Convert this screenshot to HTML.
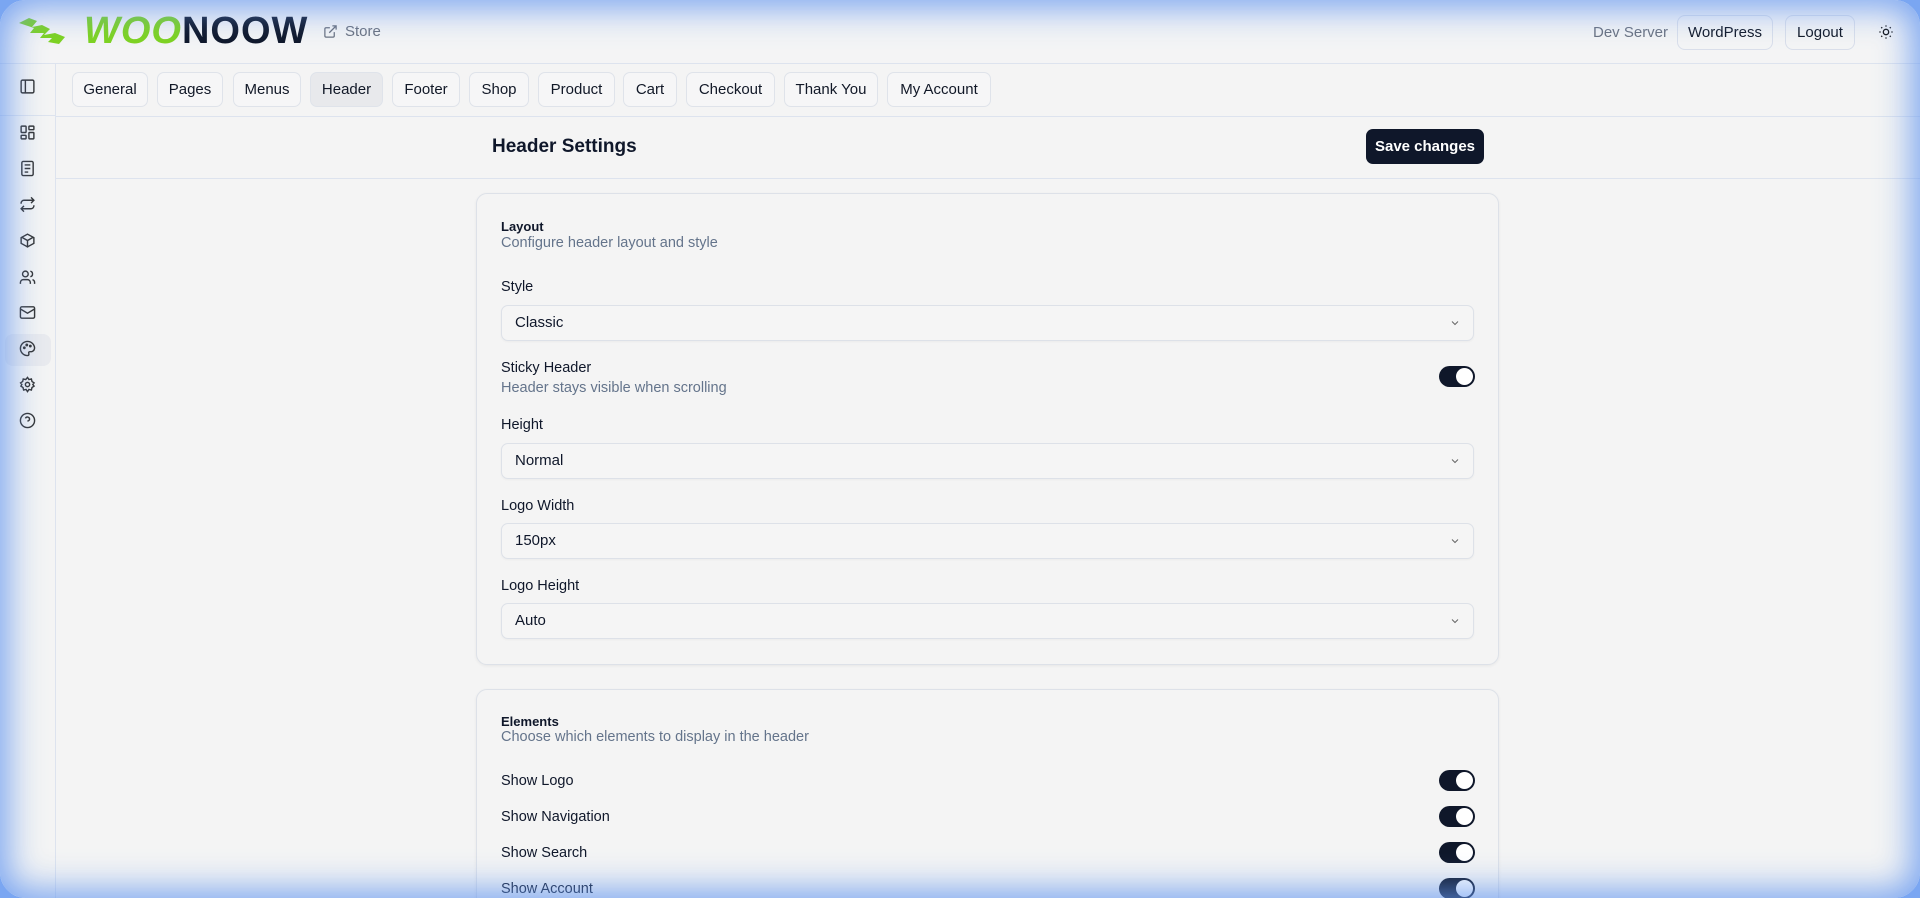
<!DOCTYPE html>
<html><head><meta charset="utf-8"><style>
*{box-sizing:border-box;margin:0;padding:0}
html,body{width:1920px;height:898px;overflow:hidden;background:#f4f4f4;font-family:"Liberation Sans",sans-serif;color:#0f172a}
#wrap{position:relative;width:1920px;height:898px;overflow:hidden}
.abs{position:absolute}
.top{position:absolute;left:0;top:0;width:1920px;height:64px;border-bottom:1px solid #dde3ee;background:#f4f4f5}
.side{position:absolute;left:0;top:64px;width:56px;height:834px;border-right:1px solid #dde3ee}
.tabs{position:absolute;left:56px;top:64px;right:0;height:53px;border-bottom:1px solid #dde3ee}
.tab{position:absolute;top:8px;height:35px;border:1px solid #dfe3ea;border-radius:7px;background:#f6f6f7;font-size:15px;line-height:33px;text-align:center;color:#111827}
.tab.on{background:#e8e9ec}
.hdr{position:absolute;left:56px;top:117px;right:0;height:62px;border-bottom:1px solid #dde3ee}
.card{position:absolute;left:476px;width:1023px;border:1px solid #dde1e8;border-radius:11px;background:#f4f4f4;box-shadow:0 1px 3px rgba(0,0,0,.06)}
.t{position:absolute;left:501px;font-size:14.5px;color:#0f172a}
.b{font-weight:bold;font-size:13px}
.d{position:absolute;left:501px;font-size:14.5px;color:#64748b}
.sel{position:absolute;left:501px;width:973px;border:1px solid #dde1e8;border-radius:7px;background:#f5f5f5;font-size:15px;padding-left:13px;box-shadow:0 1px 2px rgba(0,0,0,.04)}
.sel svg{position:absolute;right:12px;top:50%;margin-top:-6px}
.tg{position:absolute;left:1439px;width:36px;height:21px;border-radius:11px;background:#0f172a}
.tg::after{content:"";position:absolute;right:2px;top:2px;width:17px;height:17px;border-radius:50%;background:#fff}
.ic{position:absolute;left:19px;width:17px;height:17px}
.btn{position:absolute;top:15px;height:35px;border:1px solid #d9deea;border-radius:8px;font-size:15px;line-height:33px;text-align:center;color:#111827}
.glow{position:absolute;left:-20px;top:-20px;width:1960px;height:938px;border:20px solid #7aa6f2;border-radius:46px;box-shadow:inset 0 0 34px 8px rgba(100,150,240,.85);pointer-events:none}
</style></head><body><div id="wrap">
<div class="top">
<svg class="abs" style="left:15px;top:15px" width="62" height="32" viewBox="0 0 62 32"><path d="M4 8 L14 3 L22 6 L17 12 L27 10 L35 14 L29 20 L40 18 L50 22 L44 29 L33 27 L37 23 L25 23 L29 18 L15 18 L19 13 Z" fill="#7ed321"/></svg>
<div class="abs" style="left:84px;top:10px;font-size:38px;font-weight:bold;letter-spacing:1px;font-style:italic;color:#7ed321">WOO<span style="color:#0f172a;font-style:normal">NOOW</span></div>
<svg class="abs" style="left:323px;top:24px" width="15" height="15" viewBox="0 0 24 24" fill="none" stroke="#6b7280" stroke-width="2"><path d="M15 3h6v6M10 14L21 3M18 13v6a2 2 0 0 1-2 2H5a2 2 0 0 1-2-2V8a2 2 0 0 1 2-2h6"/></svg>
<div class="abs" style="left:345px;top:23px;font-size:15px;color:#6b7280">Store</div>
<div class="abs" style="left:1593px;top:24px;font-size:15px;color:#6b7280">Dev Server</div>
<div class="btn" style="left:1677px;width:96px">WordPress</div>
<div class="btn" style="left:1785px;width:70px">Logout</div>
<svg class="abs" style="left:1878px;top:24px" width="16" height="16" viewBox="0 0 24 24" fill="none" stroke="#111" stroke-width="2"><circle cx="12" cy="12" r="4"/><path d="M12 2v2M12 20v2M4.9 4.9l1.4 1.4M17.7 17.7l1.4 1.4M2 12h2M20 12h2M4.9 19.1l1.4-1.4M17.7 6.3l1.4-1.4"/></svg>
</div>
<div class="side">
<div class="abs" style="left:0;top:51px;width:55px;border-top:1px solid #dde3ee"></div>
<div class="abs" style="left:5px;top:270px;width:46px;height:32px;border-radius:8px;background:#e9eaee"></div>
<svg class="ic" style="top:14px" viewBox="0 0 24 24" fill="none" stroke="#333" stroke-width="2"><rect x="3" y="3" width="18" height="18" rx="2"/><path d="M9 3v18"/></svg>
<svg class="ic" style="top:60px" viewBox="0 0 24 24" fill="none" stroke="#333" stroke-width="2"><rect x="3" y="3" width="7" height="9" rx="1"/><rect x="14" y="3" width="7" height="5" rx="1"/><rect x="14" y="12" width="7" height="9" rx="1"/><rect x="3" y="16" width="7" height="5" rx="1"/></svg>
<svg class="ic" style="top:96px" viewBox="0 0 24 24" fill="none" stroke="#333" stroke-width="2"><rect x="4" y="2" width="16" height="20" rx="2"/><path d="M8 7h8M8 12h8M8 17h5"/></svg>
<svg class="ic" style="top:132px" viewBox="0 0 24 24" fill="none" stroke="#333" stroke-width="2"><path d="M17 2l4 4-4 4M3 11v-1a4 4 0 0 1 4-4h14M7 22l-4-4 4-4M21 13v1a4 4 0 0 1-4 4H3"/></svg>
<svg class="ic" style="top:168px" viewBox="0 0 24 24" fill="none" stroke="#333" stroke-width="2"><path d="M21 16V8l-9-5-9 5v8l9 5 9-5zM3.3 7L12 12l8.7-5M12 22V12"/></svg>
<svg class="ic" style="top:205px" viewBox="0 0 24 24" fill="none" stroke="#333" stroke-width="2"><circle cx="9" cy="7" r="4"/><path d="M2 21v-2a4 4 0 0 1 4-4h6a4 4 0 0 1 4 4v2M16 3.1a4 4 0 0 1 0 7.8M22 21v-2a4 4 0 0 0-3-3.9"/></svg>
<svg class="ic" style="top:240px" viewBox="0 0 24 24" fill="none" stroke="#333" stroke-width="2"><rect x="2" y="4" width="20" height="16" rx="2"/><path d="M22 7l-10 6L2 7"/></svg>
<svg class="ic" style="top:276px" viewBox="0 0 24 24" fill="none" stroke="#333" stroke-width="2"><path d="M12 2a10 10 0 0 0 0 20c1.5 0 2-1 2-2 0-1.5-1-2 0-3s3 0 5-1 3-3 3-5A10 10 0 0 0 12 2z"/><circle cx="7.5" cy="11" r="1"/><circle cx="11" cy="7" r="1"/><circle cx="16" cy="8.5" r="1"/></svg>
<svg class="ic" style="top:312px" viewBox="0 0 24 24" fill="none" stroke="#333" stroke-width="2"><circle cx="12" cy="12" r="3"/><path d="M12 2l2 3 3.5-.8.8 3.5 3 2-1.8 2.3 1.8 2.3-3 2-.8 3.5-3.5-.8-2 3-2-3-3.5.8-.8-3.5-3-2L4 12 2.2 9.7l3-2 .8-3.5 3.5.8z"/></svg>
<svg class="ic" style="top:348px" viewBox="0 0 24 24" fill="none" stroke="#333" stroke-width="2"><circle cx="12" cy="12" r="10"/><path d="M9.1 9a3 3 0 0 1 5.8 1c0 2-3 3-3 3M12 17h.01"/></svg>
</div>
<div class="tabs">
<div class="tab" style="left:16px;width:76px">General</div>
<div class="tab" style="left:101px;width:66px">Pages</div>
<div class="tab" style="left:177px;width:68px">Menus</div>
<div class="tab on" style="left:254px;width:73px">Header</div>
<div class="tab" style="left:336px;width:68px">Footer</div>
<div class="tab" style="left:413px;width:60px">Shop</div>
<div class="tab" style="left:482px;width:77px">Product</div>
<div class="tab" style="left:567px;width:54px">Cart</div>
<div class="tab" style="left:630px;width:89px">Checkout</div>
<div class="tab" style="left:728px;width:94px">Thank You</div>
<div class="tab" style="left:831px;width:104px">My Account</div>
</div>
<div class="hdr">
<div class="abs" style="left:436px;top:19px;font-size:19px;font-weight:bold">Header Settings</div>
<div class="abs" style="left:1310px;top:12px;width:118px;height:35px;border-radius:7px;background:#0f172a;color:#fff;font-size:15px;font-weight:bold;line-height:35px;text-align:center">Save changes</div>
</div>
<div class="card" style="top:193px;height:472px"></div>
<div class="t b" style="top:219px">Layout</div>
<div class="d" style="top:235px">Configure header layout and style</div>
<div class="t" style="top:279px">Style</div>
<div class="sel" style="top:305px;height:36px;line-height:34px">Classic<svg width="12" height="12" viewBox="0 0 24 24" fill="none" stroke="#666" stroke-width="2"><path d="M6 9l6 6 6-6"/></svg></div>
<div class="t" style="top:360px">Sticky Header</div>
<div class="d" style="top:380px">Header stays visible when scrolling</div>
<div class="tg" style="top:366px"></div>
<div class="t" style="top:417px">Height</div>
<div class="sel" style="top:443px;height:36px;line-height:34px">Normal<svg width="12" height="12" viewBox="0 0 24 24" fill="none" stroke="#666" stroke-width="2"><path d="M6 9l6 6 6-6"/></svg></div>
<div class="t" style="top:498px">Logo Width</div>
<div class="sel" style="top:523px;height:36px;line-height:34px">150px<svg width="12" height="12" viewBox="0 0 24 24" fill="none" stroke="#666" stroke-width="2"><path d="M6 9l6 6 6-6"/></svg></div>
<div class="t" style="top:578px">Logo Height</div>
<div class="sel" style="top:603px;height:36px;line-height:34px">Auto<svg width="12" height="12" viewBox="0 0 24 24" fill="none" stroke="#666" stroke-width="2"><path d="M6 9l6 6 6-6"/></svg></div>
<div class="card" style="top:689px;height:230px"></div>
<div class="t b" style="top:714px">Elements</div>
<div class="d" style="top:729px">Choose which elements to display in the header</div>
<div class="t" style="top:773px">Show Logo</div><div class="tg" style="top:770px"></div>
<div class="t" style="top:809px">Show Navigation</div><div class="tg" style="top:806px"></div>
<div class="t" style="top:845px">Show Search</div><div class="tg" style="top:842px"></div>
<div class="t" style="top:881px">Show Account</div><div class="tg" style="top:878px"></div>
<div class="glow"></div>
</div></body></html>
